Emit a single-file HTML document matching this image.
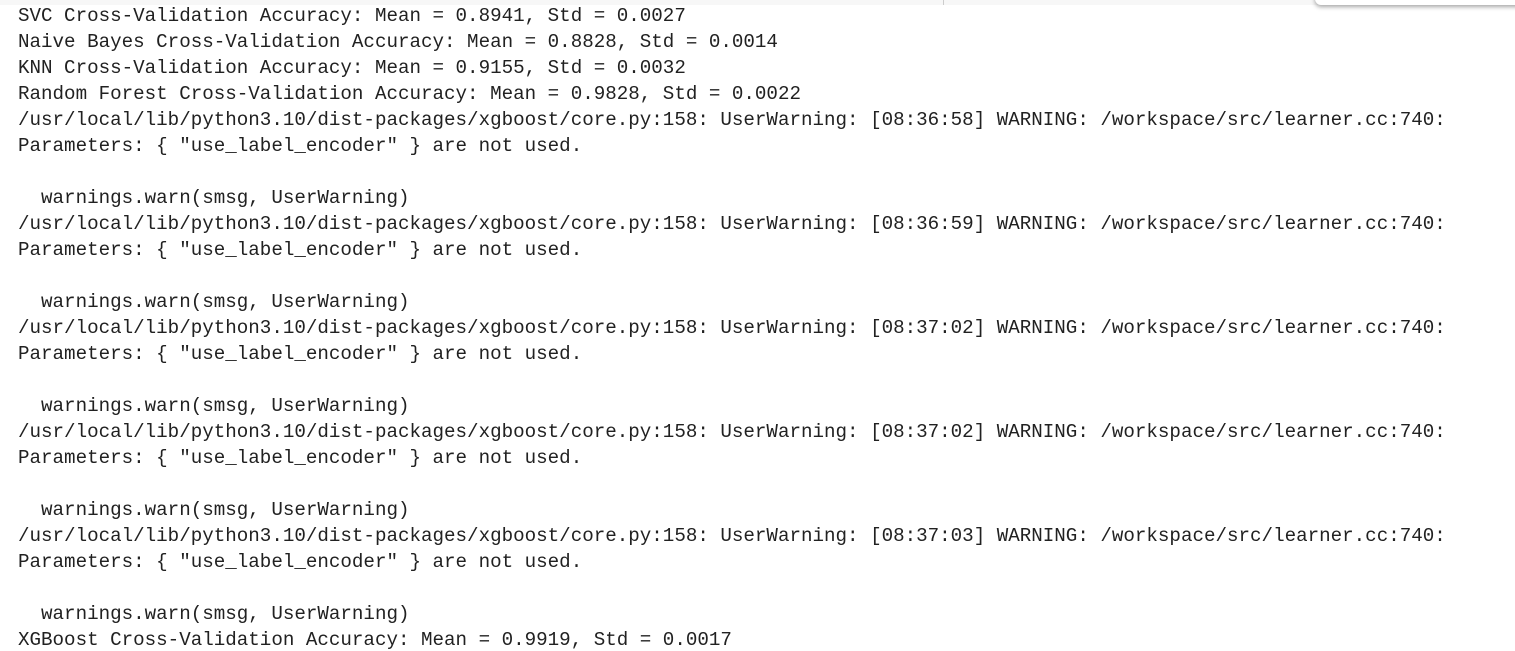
<!DOCTYPE html>
<html><head><meta charset="utf-8"><style>
html,body{margin:0;padding:0;background:#fff;width:1515px;height:651px;overflow:hidden;position:relative}
.bar{position:absolute;left:0;top:0;width:1515px;height:5px;background:#f7f7f7}
.div{position:absolute;left:943px;top:0;width:1px;height:5px;background:#ccc}
.card{position:absolute;left:1315px;top:-10px;width:220px;height:15px;background:#fff;border-radius:6px;box-shadow:0 2px 4px rgba(0,0,0,0.35)}
pre{position:absolute;left:18px;top:3px;margin:0;font-family:"Liberation Mono",monospace;font-size:19.2px;line-height:26px;color:#212121}
</style></head><body>
<div class="bar"></div><div class="div"></div><div class="card"></div>
<pre>SVC Cross-Validation Accuracy: Mean = 0.8941, Std = 0.0027
Naive Bayes Cross-Validation Accuracy: Mean = 0.8828, Std = 0.0014
KNN Cross-Validation Accuracy: Mean = 0.9155, Std = 0.0032
Random Forest Cross-Validation Accuracy: Mean = 0.9828, Std = 0.0022
/usr/local/lib/python3.10/dist-packages/xgboost/core.py:158: UserWarning: [08:36:58] WARNING: /workspace/src/learner.cc:740: 
Parameters: { "use_label_encoder" } are not used.

  warnings.warn(smsg, UserWarning)
/usr/local/lib/python3.10/dist-packages/xgboost/core.py:158: UserWarning: [08:36:59] WARNING: /workspace/src/learner.cc:740: 
Parameters: { "use_label_encoder" } are not used.

  warnings.warn(smsg, UserWarning)
/usr/local/lib/python3.10/dist-packages/xgboost/core.py:158: UserWarning: [08:37:02] WARNING: /workspace/src/learner.cc:740: 
Parameters: { "use_label_encoder" } are not used.

  warnings.warn(smsg, UserWarning)
/usr/local/lib/python3.10/dist-packages/xgboost/core.py:158: UserWarning: [08:37:02] WARNING: /workspace/src/learner.cc:740: 
Parameters: { "use_label_encoder" } are not used.

  warnings.warn(smsg, UserWarning)
/usr/local/lib/python3.10/dist-packages/xgboost/core.py:158: UserWarning: [08:37:03] WARNING: /workspace/src/learner.cc:740: 
Parameters: { "use_label_encoder" } are not used.

  warnings.warn(smsg, UserWarning)
XGBoost Cross-Validation Accuracy: Mean = 0.9919, Std = 0.0017</pre>
</body></html>
